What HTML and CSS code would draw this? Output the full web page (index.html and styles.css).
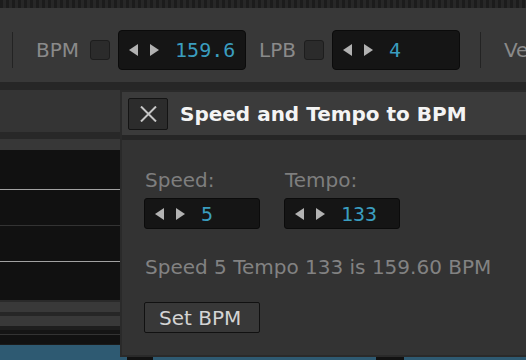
FILE: index.html
```html
<!DOCTYPE html>
<html lang="en">
<head>
  <meta charset="UTF-8">
  <meta name="viewport" content="width=device-width, initial-scale=1.0">
  <title>Speed and Tempo to BPM</title>
  <link rel="stylesheet" href="styles.css">
</head>
<body>
  <!-- Striped top edge -->
  <div class="topstrip"></div>

  <!-- Transport toolbar -->
  <div class="toolbar">
    <span class="sep"></span>
    <span class="tb-label bpm-label">BPM</span>
    <span class="check"></span>
    <div class="spin tb-spin">
      <svg class="arrow" width="9" height="12" viewBox="0 0 9 12"><polygon points="9,0 9,12 0,6"/></svg>
      <svg class="arrow right" width="9" height="12" viewBox="0 0 9 12"><polygon points="0,0 0,12 9,6"/></svg>
      <span class="spin-value">159.6</span>
    </div>
    <span class="tb-label lpb-label">LPB</span>
    <span class="check lpb-check"></span>
    <div class="spin tb-spin">
      <svg class="arrow" width="9" height="12" viewBox="0 0 9 12"><polygon points="9,0 9,12 0,6"/></svg>
      <svg class="arrow right" width="9" height="12" viewBox="0 0 9 12"><polygon points="0,0 0,12 9,6"/></svg>
      <span class="spin-value">4</span>
    </div>
    <span class="sep sep-right"></span>
    <span class="tb-label vel-label">Ve</span>
  </div>

  <div class="band"></div>

  <!-- Pattern area behind the dialog -->
  <div class="workspace">
    <div class="ws-header"></div>
    <div class="ws-line dark"></div>
    <div class="ws-sub"></div>
    <div class="tracks">
      <div class="track t1"></div>
      <div class="track t2"></div>
      <div class="track t3"></div>
      <div class="track t4"></div>
    </div>
    <div class="ws-line edge"></div>
    <div class="ws-bar"></div>
    <div class="ws-line mid"></div>
    <div class="ws-bar"></div>
    <div class="ws-line low"></div>
    <div class="ws-line lower"></div>
    <div class="ws-line rule"></div>
    <div class="ws-foot"></div>
    <div class="ws-blue">
      <span class="handle"></span>
      <span class="handle second"></span>
    </div>

    <!-- Dialog -->
    <div class="dialog">
      <div class="dialog-head">
        <button class="close-btn">
          <svg width="17" height="16" viewBox="0 0 17 16"><path d="M1 0.5 L16 15.5 M16 0.5 L1 15.5"/></svg>
        </button>
        <span class="dialog-title">Speed and Tempo to BPM</span>
      </div>
      <div class="dialog-body">
        <div class="fields">
          <div class="field">
            <div class="field-label">Speed:</div>
            <div class="spin dlg-spin">
              <svg class="arrow" width="9" height="12" viewBox="0 0 9 12"><polygon points="9,0 9,12 0,6"/></svg>
              <svg class="arrow right" width="9" height="12" viewBox="0 0 9 12"><polygon points="0,0 0,12 9,6"/></svg>
              <span class="spin-value">5</span>
            </div>
          </div>
          <div class="field">
            <div class="field-label">Tempo:</div>
            <div class="spin dlg-spin">
              <svg class="arrow" width="9" height="12" viewBox="0 0 9 12"><polygon points="9,0 9,12 0,6"/></svg>
              <svg class="arrow right" width="9" height="12" viewBox="0 0 9 12"><polygon points="0,0 0,12 9,6"/></svg>
              <span class="spin-value">133</span>
            </div>
          </div>
        </div>
        <div class="summary">Speed 5 Tempo 133 is 159.60 BPM</div>
        <button class="set-btn">Set BPM</button>
      </div>
    </div>
  </div>
</body>
</html>
```

FILE: styles.css
```css
/* Styles */
* {
  box-sizing: border-box;
}

body {
  margin: 0;
  width: 526px;
  height: 360px;
  overflow: hidden;
  background: #383838;
  font-family: "DejaVu Sans", sans-serif;
  font-size: 20px;
}

.topstrip {
  height: 8px;
  background: repeating-linear-gradient(90deg, #1c1c1c 0, #1c1c1c 3px, #272727 3px, #272727 6px);
}

/* Toolbar */
.toolbar {
  display: flex;
  align-items: center;
  height: 74px;
  padding: 10px 0 0 12px;
  background: #383838;
  white-space: nowrap;
  overflow: hidden;
}

.toolbar > * {
  flex-shrink: 0;
}

.sep {
  width: 1px;
  height: 36px;
  background: #232323;
}

.sep-right {
  margin-left: 20px;
}

.tb-label {
  color: #8a8a8a;
  line-height: 24px;
}

.bpm-label {
  margin-left: 23px;
}

.lpb-label {
  margin-left: 13px;
}

.vel-label {
  margin-left: 23px;
}

.check {
  width: 20px;
  height: 20px;
  margin: 0 8px 0 11px;
  background: #2b2b2b;
  border: 1px solid #1d1d1d;
  border-radius: 3px;
}

.lpb-check {
  margin-left: 8px;
}

/* Spin boxes */
.spin {
  display: flex;
  align-items: center;
  padding-left: 10px;
  background: #151515;
  border: 1px solid #0b0b0b;
  border-radius: 4px;
}

.tb-spin {
  width: 128px;
  height: 40px;
}

.dlg-spin {
  width: 116px;
  height: 31px;
  border-radius: 3px;
}

.arrow {
  fill: #b2b2b2;
}

.arrow.right {
  margin-left: 12px;
}

.spin-value {
  margin-left: 16px;
  font-family: "DejaVu Sans Mono", monospace;
  color: #3a9dbf;
  line-height: 24px;
}

.band {
  height: 8px;
  background: #262626;
}

/* Workspace behind dialog */
.workspace {
  position: relative;
  height: 270px;
}

.ws-header {
  height: 42px;
  background: #343434;
}

.ws-line.dark {
  height: 7px;
  background: #282828;
}

.ws-sub {
  height: 11px;
  background: #373737;
}

.tracks {
  background: #111;
}

.track {
  border-bottom: 1px solid #a2a2a2;
}

.t1 {
  height: 40px;
}

.t2 {
  height: 36px;
  border-bottom-color: #333;
}

.t3 {
  height: 36px;
}

.t4 {
  height: 38px;
  border-bottom: none;
}

.ws-line.edge {
  height: 2px;
  background: #2a2a2a;
}

.ws-bar {
  height: 10px;
  background: #393939;
}

.ws-line.mid {
  height: 4px;
  background: #262626;
}

.ws-line.low {
  height: 4px;
  background: #1e1e1e;
}

.ws-line.lower {
  height: 4px;
  background: #141414;
}

.ws-line.rule {
  height: 1px;
  background: #333;
}

.ws-foot {
  height: 9px;
  background: #111;
}

.ws-blue {
  display: flex;
  height: 16px;
  background: #2e5a72;
  border-top: 1px solid #1a1a1a;
}

.handle {
  width: 26px;
  height: 16px;
  margin-left: 127px;
  background: #121212;
}

.handle.second {
  margin-left: 223px;
  width: 28px;
}

/* Dialog */
.dialog {
  position: absolute;
  left: 120px;
  top: 0;
  width: 440px;
  height: 267px;
  background: #333;
  border: 2px solid #2a2a2a;
  border-right: none;
}

.dialog-head {
  display: flex;
  align-items: center;
  height: 48px;
  padding-left: 6px;
  background: #3b3b3b;
  border-bottom: 5px solid #262626;
}

.close-btn {
  width: 40px;
  height: 32px;
  padding: 0;
  display: flex;
  align-items: center;
  justify-content: center;
  background: #2c2c2c;
  border: 1px solid #141414;
  border-radius: 2px;
}

.close-btn svg {
  stroke: #c6c6c6;
  stroke-width: 2;
  fill: none;
}

.dialog-title {
  margin-left: 12px;
  font-weight: bold;
  color: #f4f4f4;
  line-height: 24px;
}

.dialog-body {
  padding: 28px 0 0 22px;
}

.fields {
  display: flex;
  gap: 24px;
}

.field-label {
  color: #7e7e7e;
  line-height: 24px;
  margin-bottom: 6px;
  padding-left: 1px;
}

.summary {
  margin-top: 26px;
  padding-left: 1px;
  color: #828282;
  line-height: 24px;
}

.set-btn {
  display: block;
  width: 116px;
  height: 31px;
  margin-top: 23px;
  padding: 0 0 0 14px;
  text-align: left;
  font-family: "DejaVu Sans", sans-serif;
  font-size: 20px;
  color: #d4d4d4;
  background: #383838;
  border: 1px solid #111;
  border-radius: 2px;
}
```
